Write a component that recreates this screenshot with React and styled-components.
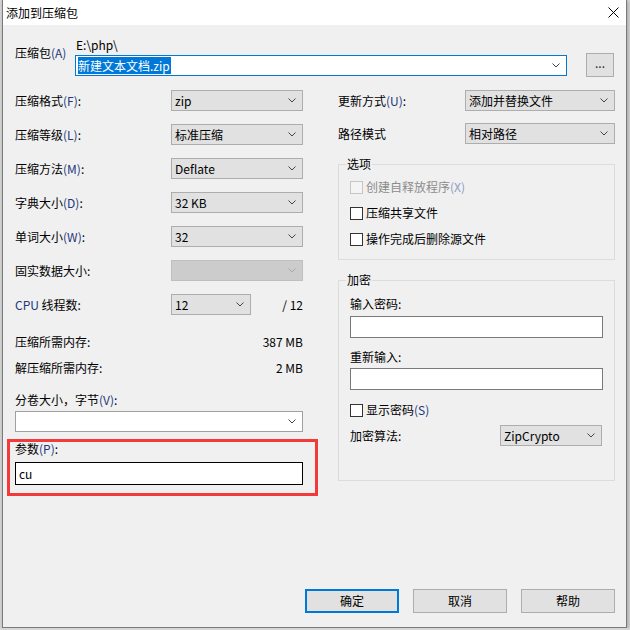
import React from 'react'
import styled, { createGlobalStyle } from 'styled-components'

const GlobalStyle = createGlobalStyle`
  html, body {
    margin: 0;
    padding: 0;
    background: #d6d6d6;
  }
  body {
    font-family: "Noto Sans CJK SC", "Noto Sans", sans-serif;
    font-size: 12px;
    color: #000;
  }
  * {
    box-sizing: border-box;
  }
`

const Window = styled.div`
  margin-left: 2px;
  width: 625px;
  height: 628px;
  border: 1px solid #7a7a7a;
  border-top: none;
  background: #f0f0f0;
  display: flex;
  flex-direction: column;
  box-shadow: 1px 1px 4px rgba(0, 0, 0, 0.25);
`

const TitleBar = styled.div`
  height: 25px;
  flex-shrink: 0;
  background: #fff;
  display: flex;
  align-items: center;
  justify-content: space-between;
  padding: 0 7px 0 3px;
  line-height: 14px;
`

const Body = styled.div`
  flex: 1;
  display: flex;
  flex-direction: column;
  padding: 13px 10px 14px 12px;
  line-height: 14px;
`

const Mn = styled.span`
  color: #22387a;
`

const ArchiveRow = styled.div`
  display: flex;
  align-items: flex-start;
`

const ArchiveLabel = styled.div`
  width: 60px;
  margin-top: 8px;
`

const ArchivePath = styled.div`
  width: 492px;
  display: flex;
  flex-direction: column;
`

const PathText = styled.div`
  padding-left: 1px;
`

const Combo = styled.div`
  margin-top: ${p => p.$mt || 0}px;
  height: 21px;
  background: #fff;
  border: 1px solid ${p => (p.$focused ? '#0078d7' : '#a0a0a0')};
  display: flex;
  align-items: center;
  justify-content: space-between;
  padding: 0 6px 0 2px;
`

const Selected = styled.span`
  background: #0078d7;
  color: #fff;
  line-height: 17px;
  padding-right: 1px;
`

const BrowseButton = styled.div`
  margin-left: 19px;
  margin-top: 15px;
  width: 28px;
  height: 24px;
  background: #e1e1e1;
  border: 1px solid #adadad;
  display: flex;
  align-items: center;
  justify-content: center;
  padding-bottom: 4px;
  color: #222;
`

const Columns = styled.div`
  margin-top: 13px;
  display: flex;
  gap: 35px;
`

const LeftCol = styled.div`
  width: 288px;
  display: flex;
  flex-direction: column;
`

const RightCol = styled.div`
  width: 277px;
  display: flex;
  flex-direction: column;
`

const FieldStack = styled.div`
  display: flex;
  flex-direction: column;
  gap: ${p => p.$gap}px;
`

const FieldRow = styled.div`
  display: grid;
  grid-template-columns: ${p => p.$cols};
  align-items: center;
  height: 21px;
`

const SelectBox = styled.div`
  height: 21px;
  display: flex;
  align-items: center;
  justify-content: space-between;
  padding: 0 6px 0 3px;
  background: ${p => (p.$disabled ? '#cccccc' : '#e1e1e1')};
  border: 1px solid ${p => (p.$disabled ? '#bfbfbf' : '#adadad')};
`

const ThreadTotal = styled.div`
  text-align: right;
`

const MemList = styled.div`
  margin-top: 20px;
  display: flex;
  flex-direction: column;
  gap: 12px;
`

const MemRow = styled.div`
  display: flex;
  justify-content: space-between;
`

const VolumeLabel = styled.div`
  margin-top: 18px;
`

const ParamBox = styled.div`
  margin: 7px -15px 0 -8px;
  border: 3px solid #f23a3a;
  padding: 0 12px 8px 5px;
`

const TextInput = styled.div`
  margin-top: ${p => p.$mt}px;
  height: ${p => p.$h}px;
  background: #fff;
  border: 1px solid ${p => (p.$dark ? '#000' : '#7a7a7a')};
  display: flex;
  align-items: center;
  padding-left: 3px;
`

const Group = styled.div`
  margin-top: 20px;
  border: 1px solid #dcdcdc;
  padding: 0 11px ${p => p.$pb}px;
`

const GroupTitle = styled.div`
  width: fit-content;
  margin: -8px 0 0 -4px;
  padding: 0 1px;
  background: #f0f0f0;
`

const CheckList = styled.div`
  margin-top: 3px;
  display: flex;
  flex-direction: column;
`

const CheckRow = styled.div`
  margin-top: ${p => p.$mt || 0}px;
  height: 26px;
  display: flex;
  align-items: center;
  gap: 3px;
  color: ${p => (p.$disabled ? '#8c8c8c' : '#000')};
`

const CheckBox = styled.span`
  width: 13px;
  height: 13px;
  flex-shrink: 0;
  background: ${p => (p.$disabled ? '#f4f4f4' : '#fff')};
  border: 1px solid ${p => (p.$disabled ? '#c6c6c6' : '#333')};
`

const DisabledMn = styled.span`
  color: #8d9bc4;
`

const FieldLabel = styled.div`
  margin-top: ${p => p.$mt}px;
`

const AlgoRow = styled.div`
  margin-top: 2px;
  display: grid;
  grid-template-columns: 150px 102px;
  align-items: center;
`

const Footer = styled.div`
  margin-top: auto;
  margin-right: 1px;
  display: flex;
  justify-content: flex-end;
  gap: 14px;
`

const Button = styled.div`
  width: 94px;
  height: 24px;
  background: #e1e1e1;
  border: ${p => (p.$primary ? '2px solid #0078d7' : '1px solid #adadad')};
  display: flex;
  align-items: center;
  justify-content: center;
`

const Chevron = ({ color = '#444' }) => (
  <svg width="8" height="5" viewBox="0 0 8 5">
    <polyline points="0.5,0.5 4,4 7.5,0.5" fill="none" stroke={color} strokeWidth="1" />
  </svg>
)

const CloseIcon = () => (
  <svg width="11" height="11" viewBox="0 0 11 11">
    <path d="M0.5 0.5 L10.5 10.5 M10.5 0.5 L0.5 10.5" stroke="#000" strokeWidth="1" />
  </svg>
)

const Select = ({ value, disabled }) => (
  <SelectBox $disabled={disabled}>
    <span>{value}</span>
    <Chevron color={disabled ? '#a8a8a8' : '#444'} />
  </SelectBox>
)

const leftFields = [
  { label: '压缩格式', key: 'F', value: 'zip' },
  { label: '压缩等级', key: 'L', value: '标准压缩' },
  { label: '压缩方法', key: 'M', value: 'Deflate' },
  { label: '字典大小', key: 'D', value: '32 KB' },
  { label: '单词大小', key: 'W', value: '32' },
]

export default function App() {
  return (
    <>
      <GlobalStyle />
      <Window>
        <TitleBar>
          <span>添加到压缩包</span>
          <CloseIcon />
        </TitleBar>
        <Body>
          <ArchiveRow>
            <ArchiveLabel>压缩包<Mn>(A)</Mn></ArchiveLabel>
            <ArchivePath>
              <PathText>E:\php\</PathText>
              <Combo $mt={3} $focused>
                <Selected>新建文本文档.zip</Selected>
                <Chevron />
              </Combo>
            </ArchivePath>
            <BrowseButton>...</BrowseButton>
          </ArchiveRow>

          <Columns>
            <LeftCol>
              <FieldStack $gap={13}>
                {leftFields.map(f => (
                  <FieldRow key={f.key} $cols="156px 132px">
                    <span>{f.label}<Mn>({f.key})</Mn>:</span>
                    <Select value={f.value} />
                  </FieldRow>
                ))}
                <FieldRow $cols="156px 132px">
                  <span>固实数据大小:</span>
                  <Select value="" disabled />
                </FieldRow>
                <FieldRow $cols="156px 80px 1fr">
                  <span><Mn>CPU</Mn> 线程数:</span>
                  <Select value="12" />
                  <ThreadTotal>/ 12</ThreadTotal>
                </FieldRow>
              </FieldStack>

              <MemList>
                <MemRow>
                  <span>压缩所需内存:</span>
                  <span>387 MB</span>
                </MemRow>
                <MemRow>
                  <span>解压缩所需内存:</span>
                  <span>2 MB</span>
                </MemRow>
              </MemList>

              <VolumeLabel>分卷大小，字节<Mn>(V)</Mn>:</VolumeLabel>
              <Combo $mt={4}>
                <span />
                <Chevron />
              </Combo>

              <ParamBox>
                <div>参数<Mn>(P)</Mn>:</div>
                <TextInput $mt={6} $h={23} $dark>cu</TextInput>
              </ParamBox>
            </LeftCol>

            <RightCol>
              <FieldStack $gap={12}>
                <FieldRow $cols="127px 150px">
                  <span>更新方式<Mn>(U)</Mn>:</span>
                  <Select value="添加并替换文件" />
                </FieldRow>
                <FieldRow $cols="127px 150px">
                  <span>路径模式</span>
                  <Select value="相对路径" />
                </FieldRow>
              </FieldStack>

              <Group $pb={7}>
                <GroupTitle>选项</GroupTitle>
                <CheckList>
                  <CheckRow $disabled>
                    <CheckBox $disabled />
                    <span>创建自释放程序<DisabledMn>(X)</DisabledMn></span>
                  </CheckRow>
                  <CheckRow>
                    <CheckBox />
                    <span>压缩共享文件</span>
                  </CheckRow>
                  <CheckRow>
                    <CheckBox />
                    <span>操作完成后删除源文件</span>
                  </CheckRow>
                </CheckList>
              </Group>

              <Group $pb={34}>
                <GroupTitle>加密</GroupTitle>
                <FieldLabel $mt={10}>输入密码:</FieldLabel>
                <TextInput $mt={5} $h={22} />
                <FieldLabel $mt={12}>重新输入:</FieldLabel>
                <TextInput $mt={4} $h={22} />
                <CheckRow $mt={7}>
                  <CheckBox />
                  <span>显示密码<Mn>(S)</Mn></span>
                </CheckRow>
                <AlgoRow>
                  <span>加密算法:</span>
                  <Select value="ZipCrypto" />
                </AlgoRow>
              </Group>
            </RightCol>
          </Columns>

          <Footer>
            <Button $primary>确定</Button>
            <Button>取消</Button>
            <Button>帮助</Button>
          </Footer>
        </Body>
      </Window>
    </>
  )
}
